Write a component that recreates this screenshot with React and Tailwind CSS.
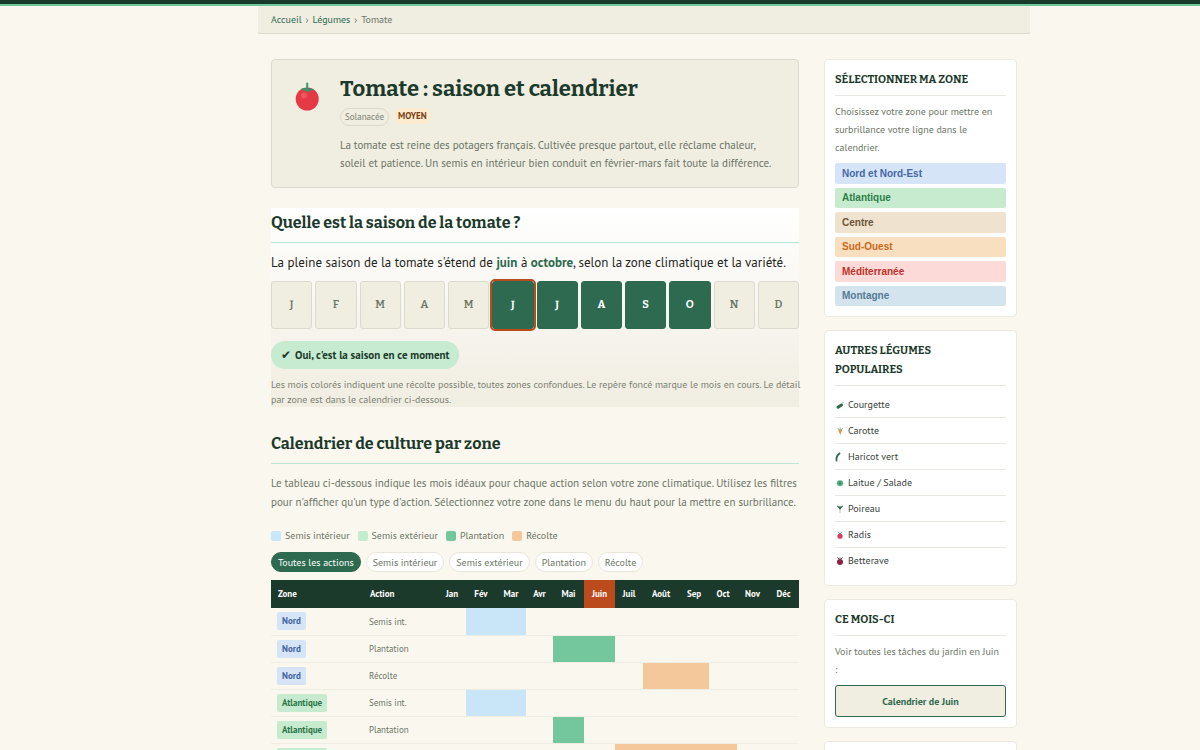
import { useState } from 'react';
import clsx from 'clsx';

const seasonMonths = ['J', 'F', 'M', 'A', 'M', 'J', 'J', 'A', 'S', 'O', 'N', 'D'];
const currentMonth = 5;

const calendarMonths = ['Jan', 'Fév', 'Mar', 'Avr', 'Mai', 'Juin', 'Juil', 'Août', 'Sep', 'Oct', 'Nov', 'Déc'];
const columnWidths = ['w-[28px]', 'w-[30px]', 'w-[30px]', 'w-[27px]', 'w-[31px]', 'w-[31px]', 'w-[28px]', 'w-[36px]', 'w-[30px]', 'w-[28px]', 'w-[31px]', 'w-[31px]'];

const rows = [
    { zone: 'Nord', action: 'Semis int.', months: [1, 2] },
    { zone: 'Nord', action: 'Plantation', months: [4, 5] },
    { zone: 'Nord', action: 'Récolte', months: [7, 8] },
    { zone: 'Atlantique', action: 'Semis int.', months: [1, 2] },
    { zone: 'Atlantique', action: 'Plantation', months: [4] },
    { zone: 'Atlantique', action: 'Récolte', months: [6, 7, 8, 9] },
];

const zoneBadge = {
    Nord: 'bg-[#d6e4f7] text-[#3c629f]',
    Atlantique: 'bg-[#c6ebcf] text-[#2a7547]',
};

const actionColor = {
    'Semis int.': 'bg-[#c8e6f8]',
    Plantation: 'bg-[#74c69d]',
    'Récolte': 'bg-[#f4c89a]',
};

const legend = [
    { label: 'Semis intérieur', color: 'bg-[#c8e6f8]' },
    { label: 'Semis extérieur', color: 'bg-[#c3ecd0]' },
    { label: 'Plantation', color: 'bg-[#74c69d]' },
    { label: 'Récolte', color: 'bg-[#f4c89a]' },
];

const filters = ['Toutes les actions', 'Semis intérieur', 'Semis extérieur', 'Plantation', 'Récolte'];

const zones = [
    { label: 'Nord et Nord-Est', style: 'bg-[#d6e4f7] text-[#4468a5]' },
    { label: 'Atlantique', style: 'bg-[#c6ebcf] text-[#2d8049]' },
    { label: 'Centre', style: 'bg-[#efe3cf] text-[#6b5537]' },
    { label: 'Sud-Ouest', style: 'bg-[#f8dfc0] text-[#c8691c]' },
    { label: 'Méditerranée', style: 'bg-[#fbdad8] text-[#c0312b]' },
    { label: 'Montagne', style: 'bg-[#d3e4ef] text-[#557a92]' },
];

const Tomato = () => (
    <svg viewBox="0 0 48 48" className="h-12 w-12" aria-hidden="true">
        <circle cx="23.200" cy="27" r="11.500" fill="#e63946" />
        <circle cx="20" cy="23.500" r="3" fill="#f0626b" opacity=".7" />
        <path d="M23.200 19v-7.500" stroke="#40916c" strokeWidth="2" strokeLinecap="round" />
        <path d="M16.500 17q3.500-1.500 7-1t6.500 1q-3.500 3-6.500 2.500t-7-2.500z" fill="#40916c" />
    </svg>
);

const vegetables = [
    {
        name: 'Courgette',
        icon: (
            <>
                <path d="M3 7.300 6.500 5" stroke="#2d6a4f" strokeWidth="3" strokeLinecap="round" />
                <path d="m7.500 3.500 1-1.500" stroke="#74c69d" />
            </>
        ),
    },
    {
        name: 'Carotte',
        icon: (
            <>
                <path d="M3 3.500h4.400L5.300 9z" fill="#e8944a" />
                <path d="M5.200 4V1.500M4.500 4 2.500 2M5.800 4l2-2" stroke="#74a57d" strokeWidth=".8" />
            </>
        ),
    },
    {
        name: 'Haricot vert',
        icon: <path d="M1.500 8.500q-.5-4.500 3-7" stroke="#2d6a4f" strokeWidth="1.800" fill="none" strokeLinecap="round" />,
    },
    {
        name: 'Laitue / Salade',
        icon: (
            <>
                <ellipse cx="5" cy="5.200" rx="3.200" ry="3" fill="#52b788" />
                <circle cx="5" cy="5" r="1.700" fill="#40916c" />
            </>
        ),
    },
    {
        name: 'Poireau',
        icon: (
            <>
                <path d="M5 4.500v4.500" stroke="#cfe3d3" strokeWidth="1.600" />
                <path d="M5 5 2.500 1.800M5 5l2.500-3.200M5 5.500V2" stroke="#2d6a4f" strokeWidth="1.100" />
            </>
        ),
    },
    {
        name: 'Radis',
        icon: (
            <>
                <circle cx="5" cy="6.200" r="2.600" fill="#d6405a" />
                <path d="M5 4 2.800 2M5 4l2.200-2" stroke="#40916c" strokeWidth=".8" />
            </>
        ),
    },
    {
        name: 'Betterave',
        icon: (
            <>
                <circle cx="5" cy="6" r="3" fill="#8e2148" />
                <path d="M5 4 2.500 1.300M5 4l2.500-2.700M5 4V1.500" stroke="#7a3b4d" strokeWidth=".9" />
            </>
        ),
    },
];

const SectionTitle = ({ children }) => (
    <h2 className="border-b border-[#bfe6d2] pb-1.5 font-['Bitter','DejaVu_Serif_Condensed',serif] text-[16px] leading-[26px] font-bold text-[#1b3a2b]">
        {children}
    </h2>
);

const SideCard = ({ title, children }) => (
    <section className="rounded border border-[#ebe9e0] bg-white p-2.5">
        <h3 className="border-b border-[#e8e8e3] pr-2 pb-1.5 font-['Bitter','DejaVu_Serif_Condensed',serif] text-[11px] leading-[19px] font-bold text-[#1b3a2b] uppercase">
            {title}
        </h3>
        {children}
    </section>
);

const Hero = () => (
    <header className="flex gap-2 rounded border border-[#dcdacf] bg-[#f0ede1] pt-3 pr-5 pb-[15px] pl-3">
        <div className="w-12 shrink-0">
            <Tomato />
        </div>
        <div>
            <h1 className="font-['Bitter','DejaVu_Serif_Condensed',serif] text-[22px] leading-[34px] font-bold text-[#1b3a2b]">
                Tomate : saison et calendrier
            </h1>
            <div className="mt-0.5 flex items-start gap-1">
                <span className="rounded-full border border-[#dcdacf] px-1 text-[9px] leading-4 text-[#7b7f72]">Solanacée</span>
                <span className="rounded-full bg-[#fdebd0] px-[5px] text-[9px] leading-4 font-bold text-[#7a4012]">MOYEN</span>
            </div>
            <p className="mt-2.5 text-[11px] leading-[18px] text-[#6b7566]">
                La tomate est reine des potagers français. Cultivée presque partout, elle réclame chaleur, soleil et
                patience. Un semis en intérieur bien conduit en février-mars fait toute la différence.
            </p>
        </div>
    </header>
);

const Season = () => (
    <section className="mt-5 bg-linear-to-b from-white to-[#f0ede1] pt-0.5">
        <SectionTitle>Quelle est la saison de la tomate ?</SectionTitle>
        <p className="mt-2 text-[13px] leading-6 text-[#1f2622] lg:whitespace-nowrap">
            La pleine saison de la tomate s'étend de <strong className="text-[#2d6a4f]">juin</strong> à{' '}
            <strong className="text-[#2d6a4f]">octobre</strong>, selon la zone climatique et la variété.
        </p>
        <ol className="mt-1.5 grid grid-cols-12 gap-[3px]">
            {seasonMonths.map((month, index) => (
                <li
                    key={index}
                    className={clsx(
                        "flex h-12 items-center justify-center rounded-[3px] border font-['Bitter','DejaVu_Serif_Condensed',serif] text-[11px]",
                        index >= 5 && index <= 9
                            ? 'border-[#2d6a4f] bg-[#2d6a4f] font-bold text-white'
                            : 'border-[#dcdacf] bg-[#f0ede1] font-semibold text-[#6b7566]',
                        index === currentMonth && 'outline-2 outline-[#bb4a1c]',
                    )}
                >
                    {month}
                </li>
            ))}
        </ol>
        <p className="mt-3 flex h-7 w-fit items-center gap-1 rounded-full bg-[#c6ebd0] px-2.5 text-[11px] font-bold text-[#1b3a2b]">
            <span className="font-['DejaVu_Sans',sans-serif] text-[12px]">✔</span>
            Oui, c'est la saison en ce moment
        </p>
        <p className="mt-2 text-[10px] leading-[15px] text-[#7b7f72] lg:whitespace-nowrap">
            Les mois colorés indiquent une récolte possible, toutes zones confondues. Le repère foncé marque le mois en
            cours. Le détail <br className="hidden lg:block" />
            par zone est dans le calendrier ci-dessous.
        </p>
    </section>
);

const Calendar = () => {
    const [active, setActive] = useState(filters[0]);

    return (
        <section className="mt-6">
            <SectionTitle>Calendrier de culture par zone</SectionTitle>
            <p className="mt-2.5 text-[11px] leading-[19px] text-[#6b7566]">
                Le tableau ci-dessous indique les mois idéaux pour chaque action selon votre zone climatique. Utilisez les
                filtres pour n'afficher qu'un type d'action. Sélectionnez votre zone dans le menu du haut pour la mettre en
                surbrillance.
            </p>
            <ul className="mt-4 flex gap-2 text-[10px] leading-4 text-[#6b7566]">
                {legend.map((item) => (
                    <li key={item.label} className="flex items-center gap-1">
                        <span className={clsx('h-2.5 w-2.5 rounded-xs', item.color)} />
                        {item.label}
                    </li>
                ))}
            </ul>
            <div className="mt-2 flex gap-[5px]">
                {filters.map((filter) => (
                    <button
                        key={filter}
                        onClick={() => setActive(filter)}
                        className={clsx(
                            'h-5 rounded-full border px-1.5 text-[10px]',
                            filter === active
                                ? 'border-[#2d6a4f] bg-[#2d6a4f] text-white'
                                : 'border-[#e8e6dc] bg-white text-[#6b7566]',
                        )}
                    >
                        {filter}
                    </button>
                ))}
            </div>
            <table className="mt-2 w-full table-fixed border-collapse text-left text-[9px]">
                <colgroup>
                    <col className="w-[91px]" />
                    <col />
                    {calendarMonths.map((month, index) => (
                        <col key={month} className={columnWidths[index]} />
                    ))}
                </colgroup>
                <thead className="bg-[#1b3a2b] text-white">
                    <tr className="h-7">
                        <th className="pl-[7px]">Zone</th>
                        <th className="pl-2">Action</th>
                        {calendarMonths.map((month, index) => (
                            <th key={month} className={clsx('text-center', index === currentMonth && 'bg-[#bb4a1c]')}>
                                {month}
                            </th>
                        ))}
                    </tr>
                </thead>
                <tbody>
                    {rows.map((row) => (
                        <tr key={row.zone + row.action} className="h-[27px] border-b border-[#efece2]">
                            <td className="pl-1.5">
                                <span className={clsx('inline-block rounded-xs px-[5px] leading-[18px] font-bold', zoneBadge[row.zone])}>
                                    {row.zone}
                                </span>
                            </td>
                            <td className="pl-[7px] text-[#6b7566]">{row.action}</td>
                            {calendarMonths.map((month, index) => (
                                <td key={month} className={clsx(row.months.includes(index) && actionColor[row.action])} />
                            ))}
                        </tr>
                    ))}
                </tbody>
            </table>
        </section>
    );
};

const Sidebar = () => (
    <aside className="flex flex-col gap-[13px]">
        <SideCard title="Sélectionner ma zone">
            <p className="mt-[7px] text-[10px] leading-[18px] text-[#6b7566]">
                Choisissez votre zone pour mettre en surbrillance votre ligne dans le calendrier.
            </p>
            <div className="mt-1.5 grid h-[143px] grid-rows-6 gap-1">
                {zones.map((zone) => (
                    <button
                        key={zone.label}
                        className={clsx("rounded-xs px-[7px] text-left font-['Liberation_Sans',sans-serif] text-[10px] font-bold", zone.style)}
                    >
                        {zone.label}
                    </button>
                ))}
            </div>
        </SideCard>
        <SideCard title="Autres légumes populaires">
            <ul className="mt-1.5 pb-0.5">
                {vegetables.map((vegetable) => (
                    <li key={vegetable.name} className="border-b border-[#e8e8e3] last:border-b-0">
                        <a href="#" className="flex h-[25px] items-center gap-[3px] text-[10px] text-[#37413a]">
                            <svg viewBox="0 0 10 10" className="h-2.5 w-2.5" fill="none" aria-hidden="true">
                                {vegetable.icon}
                            </svg>
                            {vegetable.name}
                        </a>
                    </li>
                ))}
            </ul>
        </SideCard>
        <SideCard title="Ce mois-ci">
            <p className="mt-[7px] pr-1 text-[10px] leading-[18px] text-[#6b7566]">Voir toutes les tâches du jardin en Juin :</p>
            <a
                href="#"
                className="mt-1.5 flex h-8 items-center justify-center rounded-[3px] border border-[#2d6a4f] bg-[#f0ede1] text-[10px] font-bold text-[#2d6a4f]"
            >
                Calendrier de Juin
            </a>
        </SideCard>
        <section className="h-24 rounded border border-[#ebe9e0] bg-white" />
    </aside>
);

export default function App() {
    return (
        <div className="min-h-screen bg-[#faf7ee] font-['PT_Sans','Lato',sans-serif]">
            <div className="h-1.5 border-b-2 border-[#74c69d] bg-[#1b3a2b]" />
            <div className="pl-[88px]">
                <div className="mx-auto max-w-[772px]">
                    <nav className="flex gap-1 border-b border-[#dcdacf] bg-[#f0ede1] px-[13px] pt-1.5 pb-[5px] text-[10px] leading-4 text-[#6b7566]">
                        <a href="#" className="text-[#2d6a4f]">Accueil</a>
                        <span>›</span>
                        <a href="#" className="text-[#2d6a4f]">Légumes</a>
                        <span>›</span>
                        <span>Tomate</span>
                    </nav>
                    <div className="grid grid-cols-[minmax(0,1fr)_193px] gap-[25px] px-[13px] pt-[25px] pb-8">
                        <main>
                            <Hero />
                            <Season />
                            <Calendar />
                        </main>
                        <Sidebar />
                    </div>
                </div>
            </div>
        </div>
    );
}
